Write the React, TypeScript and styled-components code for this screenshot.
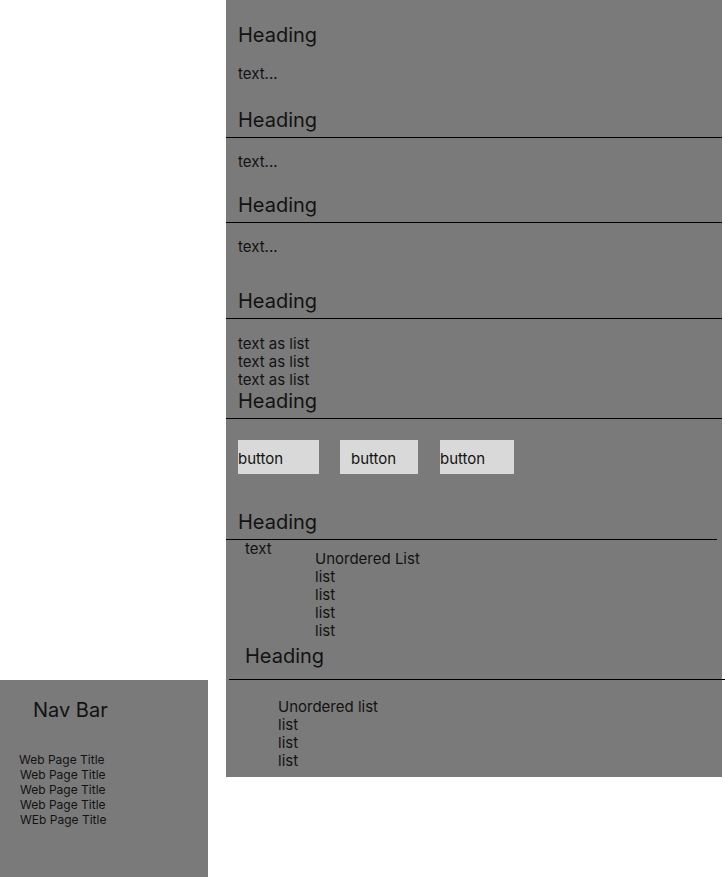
import styled, { createGlobalStyle } from "styled-components";

const GlobalStyle = createGlobalStyle`
  html,
  body {
    margin: 0;
    padding: 0;
    background: #ffffff;
  }
  body {
    font-family: Inter, "Noto Sans", sans-serif;
    color: #121212;
  }
`;

const Page = styled.div`
  display: grid;
  grid-template-columns: 208px 496px;
  column-gap: 18px;
  height: 877px;
`;

// left side nav
const NavBar = styled.nav`
  align-self: end;
  height: 197px;
  box-sizing: border-box;
  padding-top: 18px;
  background: #7a7a7a;
`;

const NavTitle = styled.div`
  padding-left: 33px;
  font-size: 20px;
  line-height: 24px;
`;

const NavList = styled.ul`
  list-style: none;
  margin: 30px 0 0;
  padding: 0 0 0 20px;
`;

const NavItem = styled.li<{ $shift?: number }>`
  margin-left: ${(p) => p.$shift ?? 0}px;
  font-size: 12px;
  line-height: 15px;
`;

// main content
const Main = styled.main`
  align-self: start;
  height: 777px;
  background: #7a7a7a;
`;

type HeadingProps = {
  $top: number;
  $ruled?: boolean;
  $pad?: number;
  $left?: number;
  $right?: number;
  $indent?: number;
};

const Heading = styled.h2<HeadingProps>`
  margin: ${(p) => p.$top}px ${(p) => p.$right ?? 0}px 0 ${(p) => p.$left ?? 0}px;
  padding: 0 0 ${(p) => (p.$ruled ? p.$pad ?? 5 : 0)}px ${(p) => p.$indent ?? 12}px;
  border-bottom: ${(p) => (p.$ruled ? "1px solid #000" : "none")};
  font-size: 20px;
  font-weight: 400;
  line-height: 24px;
`;

const Text = styled.p<{ $top: number }>`
  margin: ${(p) => p.$top}px 0 0;
  padding-left: 12px;
  font-size: 15px;
  line-height: 18px;
`;

const ButtonRow = styled.div`
  display: flex;
  margin-top: 21px;
  padding-left: 12px;
`;

const Button = styled.button<{ $width: number; $pad?: number; $offset?: number }>`
  width: ${(p) => p.$width}px;
  height: 34px;
  margin-left: ${(p) => p.$offset ?? 0}px;
  padding: 3px 0 0 ${(p) => p.$pad ?? 0}px;
  border: none;
  background: #d9d9d9;
  color: #121212;
  font-family: inherit;
  font-size: 15px;
  text-align: left;
  cursor: pointer;
`;

const SplitRow = styled.div`
  display: flex;
  align-items: flex-start;
  padding-left: 19px;
`;

const SideText = styled.span`
  width: 70px;
  font-size: 15px;
  line-height: 18px;
`;

const List = styled.ul<{ $top: number; $indent?: number }>`
  list-style: none;
  margin: ${(p) => p.$top}px 0 0;
  padding: 0 0 0 ${(p) => p.$indent ?? 0}px;
  font-size: 15px;
  line-height: 18px;
`;

const navTitles = ["Web Page Title", "Web Page Title", "Web Page Title", "Web Page Title", "WEb Page Title"];

export default function App() {
  return (
    <>
      <GlobalStyle />
      <Page>
        <NavBar>
          <NavTitle>Nav Bar</NavTitle>
          <NavList>
            {navTitles.map((t, i) => (
              <NavItem key={i} $shift={i === 0 ? -1 : 0}>
                {t}
              </NavItem>
            ))}
          </NavList>
        </NavBar>

        <Main>
          <Heading $top={23}>Heading</Heading>
          <Text $top={18}>text...</Text>

          <Heading $top={25} $ruled>
            Heading
          </Heading>
          <Text $top={15}>text...</Text>

          <Heading $top={22} $ruled>
            Heading
          </Heading>
          <Text $top={15}>text...</Text>

          <Heading $top={33} $ruled>
            Heading
          </Heading>
          <List $top={16} $indent={12}>
            <li>text as list</li>
            <li>text as list</li>
            <li>text as list</li>
          </List>

          <Heading $top={0} $ruled>
            Heading
          </Heading>
          <ButtonRow>
            <Button $width={81}>button</Button>
            <Button $width={78} $pad={11} $offset={21}>
              button
            </Button>
            <Button $width={74} $offset={22}>
              button
            </Button>
          </ButtonRow>

          <Heading $top={36} $ruled $right={5}>
            Heading
          </Heading>
          <SplitRow>
            <SideText>text</SideText>
            <List $top={10}>
              <li>Unordered List</li>
              <li>list</li>
              <li>list</li>
              <li>list</li>
              <li>list</li>
            </List>
          </SplitRow>

          <Heading $top={4} $ruled $pad={11} $left={3} $right={-3} $indent={16}>
            Heading
          </Heading>
          <List $top={18} $indent={52}>
            <li>Unordered list</li>
            <li>list</li>
            <li>list</li>
            <li>list</li>
          </List>
        </Main>
      </Page>
    </>
  );
}
